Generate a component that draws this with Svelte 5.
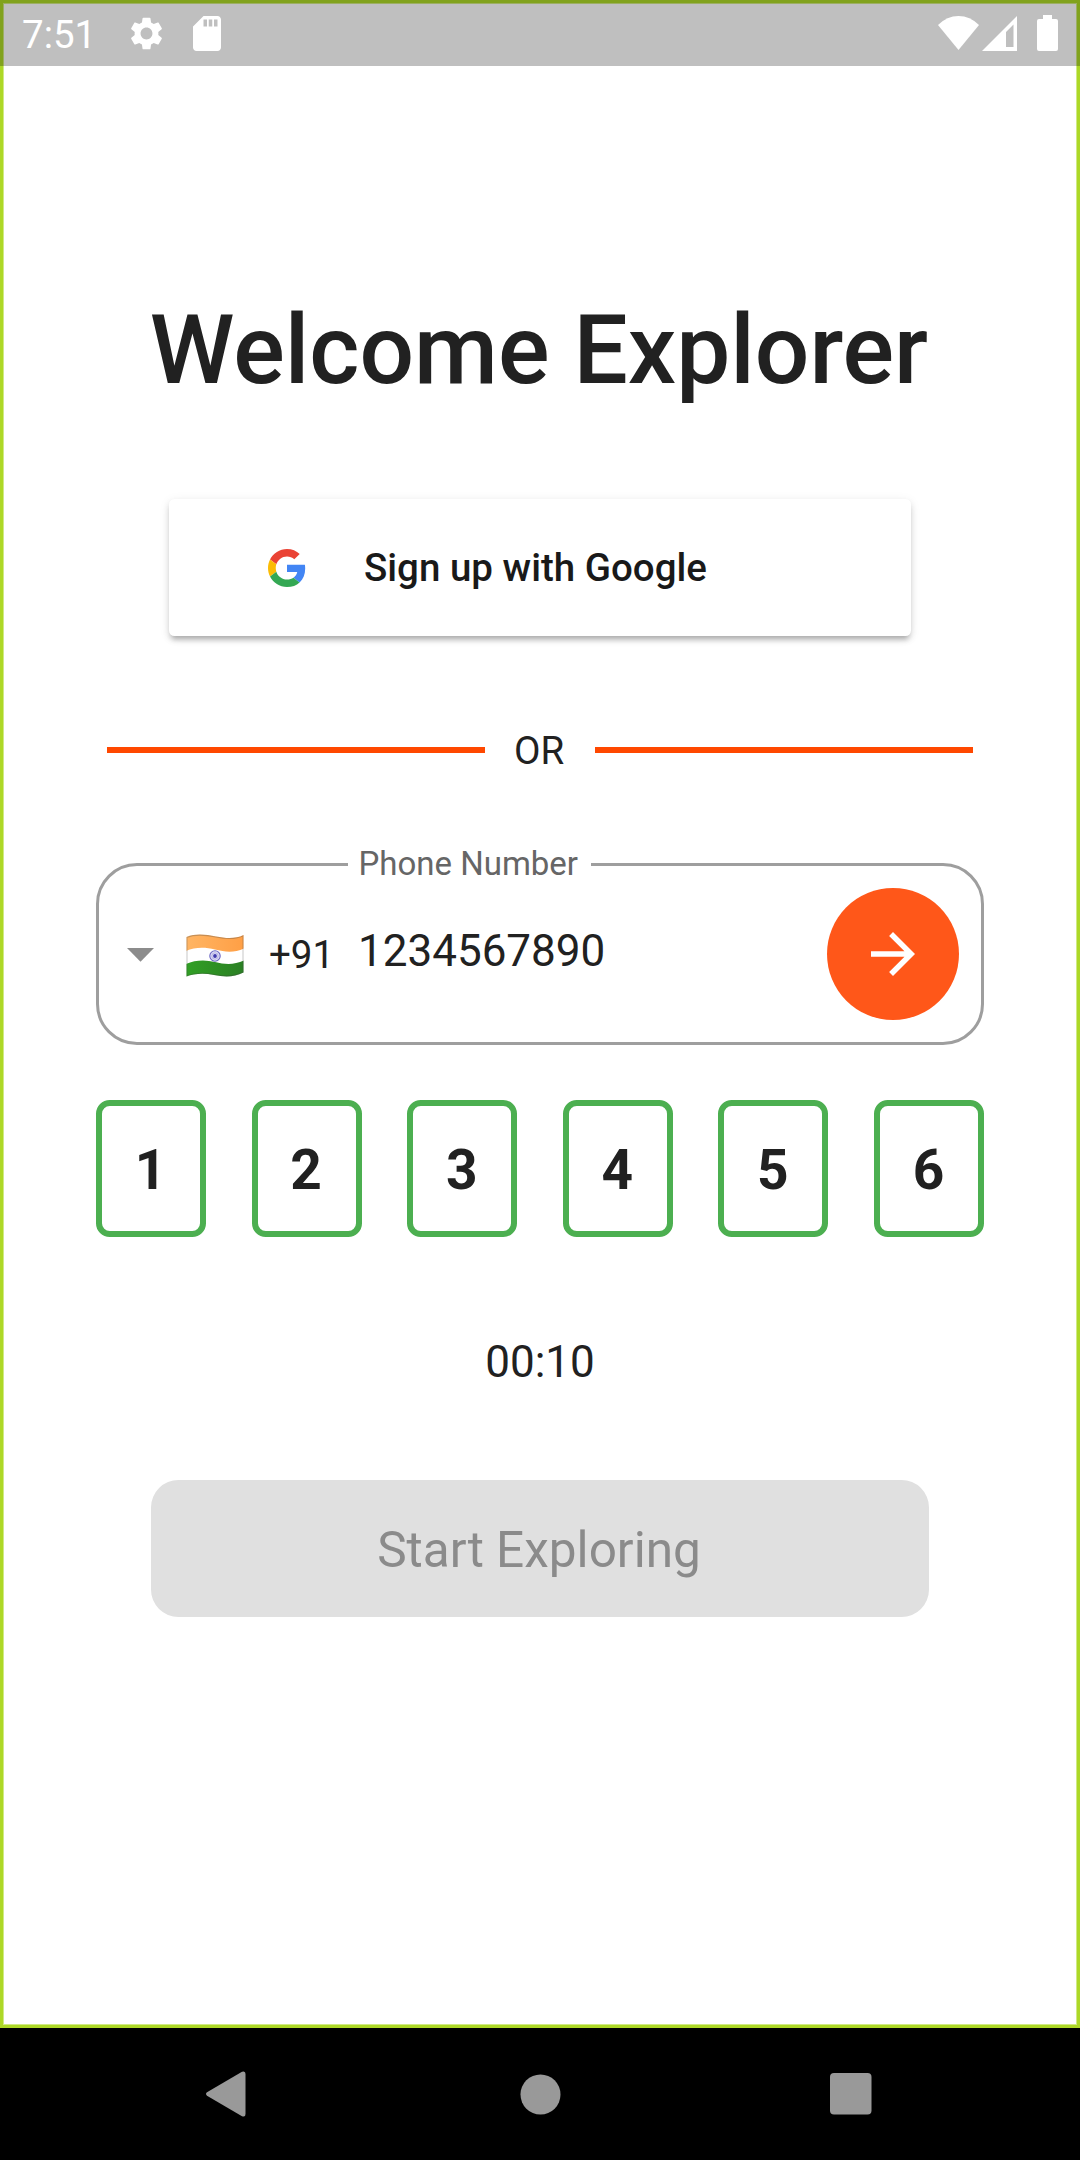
<script>
  const code = ['1', '2', '3', '4', '5', '6'];
</script>

<div class="phone">
  <div class="screen">
    <h1>Welcome Explorer</h1>

    <button class="google">
      <svg class="g-logo" viewBox="0 0 48 48">
        <path fill="#EA4335" d="M24 9.5c3.54 0 6.71 1.22 9.21 3.6l6.85-6.85C35.9 2.38 30.47 0 24 0 14.62 0 6.51 5.38 2.56 13.22l7.98 6.19C12.43 13.72 17.74 9.5 24 9.5z" />
        <path fill="#4285F4" d="M46.98 24.55c0-1.57-.15-3.09-.38-4.55H24v9.02h12.94c-.58 2.96-2.26 5.48-4.78 7.18l7.73 6c4.51-4.18 7.09-10.36 7.09-17.65z" />
        <path fill="#FBBC05" d="M10.53 28.59c-.48-1.45-.76-2.99-.76-4.59s.27-3.14.76-4.59l-7.98-6.19C.92 16.46 0 20.12 0 24c0 3.88.92 7.54 2.56 10.78l7.97-6.19z" />
        <path fill="#34A853" d="M24 48c6.48 0 11.93-2.13 15.89-5.81l-7.73-6c-2.15 1.45-4.92 2.3-8.16 2.3-6.26 0-11.57-4.22-13.47-9.91l-7.98 6.19C6.51 42.62 14.62 48 24 48z" />
      </svg>
      <span>Sign up with Google</span>
    </button>

    <div class="divider"><i></i><span>OR</span><i></i></div>

    <div class="phone-field">
      <span class="label">Phone Number</span>
      <svg class="caret" viewBox="0 0 28 14"><path d="M0 0h27L13.500 13.75z" fill="#8c8c8c" /></svg>
      <svg class="flag" viewBox="0 0 58 43">
        <defs>
          <clipPath id="cloth"><path d="M.5 3C10-1 20 .5 30 2.500s20 2.500 27.500-1.500v37.500C48 43.500 38 43 28 41S8 39.500.5 42.500z" /></clipPath>
          <linearGradient id="saffron"><stop offset="0" stop-color="#ffb564" /><stop offset="1" stop-color="#ff9f45" /></linearGradient>
          <linearGradient id="green"><stop offset="0" stop-color="#31a025" /><stop offset="1" stop-color="#2b7f24" /></linearGradient>
        </defs>
        <g clip-path="url(#cloth)">
          <path d="M0 0h58v43H0z" fill="#fff" />
          <path d="M0-2h58v16.500C48 19 39 18 29 15.500S9 13 0 17z" fill="url(#saffron)" />
          <path d="M0 45h58V26.500C48 31 39 30.500 29 28S9 26 0 30z" fill="url(#green)" />
          <path d="M.5 3C10-1 20 .5 30 2.500s20 2.500 27.500-1.500v37.500C48 43.500 38 43 28 41S8 39.500.5 42.500z" fill="none" stroke="#424242" stroke-opacity=".3" stroke-width="2" />
        </g>
        <circle cx="29" cy="22" r="5.200" fill="#e4e4f6" stroke="#6b66c4" stroke-width="1.100" />
        <circle cx="29" cy="22" r="3.200" fill="none" stroke="#b4b0e4" stroke-width="1" />
        <circle cx="29" cy="22" r="1.900" fill="#3f39ad" />
      </svg>
      <span class="dial">+91</span>
      <span class="number">1234567890</span>
      <button class="go" aria-label="Continue">
        <svg viewBox="0 0 24 24"><path fill="#fff" d="M12 4l-1.410 1.410L16.170 11H4v2h12.170l-5.580 5.590L12 20l8-8z" /></svg>
      </button>
    </div>

    <div class="otp">
      {#each code as digit}
        <span>{digit}</span>
      {/each}
    </div>

    <div class="timer">00:10</div>

    <button class="start" disabled>Start Exploring</button>
  </div>

  <div class="nav">
    <svg viewBox="0 0 40 46"><path fill="#999" d="M1 21.300 36 .8Q39.500-.5 39.500 3v40q0 3.500-3.500 2.200L1 24.700Q-1 23 1 21.300z" /></svg>
    <svg class="home" viewBox="0 0 41 41"><circle cx="20.500" cy="20.500" r="20" fill="#999" /></svg>
    <svg viewBox="0 0 42 42"><rect width="41.500" height="41.500" rx="4" fill="#999" /></svg>
  </div>

  <div class="status">
    <span>7:51</span>
    <svg class="gear" viewBox="2 2 20 20"><path fill="#fff" d="M19.140 12.940c.04-.3.060-.61.060-.94 0-.32-.02-.64-.07-.94l2.030-1.580c.18-.14.230-.41.120-.61l-1.920-3.320c-.12-.22-.37-.29-.59-.22l-2.390.96c-.5-.38-1.030-.7-1.620-.94l-.36-2.540c-.04-.24-.24-.41-.48-.41h-3.840c-.24 0-.43.170-.47.410l-.36 2.540c-.59.240-1.130.570-1.620.940l-2.390-.96c-.22-.08-.47 0-.59.220L2.740 8.870c-.12.210-.08.470.120.610l2.030 1.580c-.05.3-.09.630-.09.940s.02.640.07.940l-2.030 1.580c-.18.140-.23.410-.12.610l1.920 3.320c.12.220.37.290.59.220l2.390-.96c.5.380 1.030.7 1.620.940l.36 2.540c.05.240.24.410.48.410h3.840c.24 0 .44-.17.470-.41l.36-2.540c.59-.24 1.130-.56 1.620-.94l2.390.96c.22.080.47 0 .59-.22l1.920-3.320c.12-.22.070-.47-.12-.61l-2.010-1.580zM12 15.600c-1.980 0-3.600-1.620-3.600-3.600s1.620-3.600 3.600-3.600 3.600 1.620 3.600 3.600-1.620 3.600-3.600 3.600z" /></svg>
    <svg class="sd" viewBox="4 2 16 20" preserveAspectRatio="none"><path fill="#fff" fill-rule="evenodd" d="M18 2h-8L4 8v12c0 1.100.9 2 2 2h12c1.100 0 2-.9 2-2V4c0-1.100-.9-2-2-2zM12 8h-2V4h2zM15 8h-2V4h2zM18 8h-2V4h2z" /></svg>
    <span class="spacer"></span>
    <svg class="wifi" viewBox="0 0 41 34"><path fill="#fff" d="M20.500 34 0 9Q9 0 20.500 0T41 9z" /></svg>
    <svg class="signal" viewBox="0 0 35 35"><path fill="#fff" fill-rule="evenodd" d="M35 0v35H0zM31.500 8.500 24 16v15h7.500z" /></svg>
    <svg class="battery" viewBox="0 0 21 36"><path fill="#fff" d="M6 0h9v4h4q2 0 2 2v28q0 2-2 2H2q-2 0-2-2V6q0-2 2-2h4z" /></svg>
  </div>
</div>

<style>
  :global(body) {
    margin: 0;
    background: #fff;
  }
  .phone {
    position: relative;
    width: 1080px;
    height: 2160px;
    display: flex;
    flex-direction: column;
    font-family: Roboto, 'Liberation Sans', sans-serif;
    color: #212121;
    overflow: hidden;
  }
  .phone * {
    box-sizing: border-box;
  }
  svg {
    display: block;
    flex: none;
  }
  button {
    border: 0;
    padding: 0;
    font-family: inherit;
  }
  .screen {
    height: 2028px;
    border: 3px solid #add827;
    box-shadow: inset 0 0 0 1px #d0ea84;
    display: flex;
    flex-direction: column;
    align-items: center;
    padding-top: 291px;
  }
  h1 {
    margin: 0;
    padding-right: 2px;
    font-size: 96.25px;
    font-weight: 500;
    line-height: 112px;
    white-space: nowrap;
  }
  .google {
    width: 742px;
    height: 137px;
    margin-top: 93px;
    padding-left: 99px;
    display: flex;
    align-items: center;
    gap: 58px;
    background: #fff;
    border-radius: 5.5px;
    box-shadow: 0 5.5px 5px -3px rgba(0, 0, 0, 0.2), 0 4px 6px rgba(0, 0, 0, 0.12), 0 2px 11px rgba(0, 0, 0, 0.08);
    color: #191919;
    font-size: 38.5px;
    font-weight: 500;
    line-height: 46px;
  }
  .g-logo {
    width: 38px;
    height: 38px;
  }
  .divider {
    width: 866px;
    height: 46px;
    margin-top: 92px;
    display: flex;
    align-items: center;
    font-size: 38.5px;
    line-height: 46px;
  }
  .divider i {
    flex: 1;
    height: 6px;
    margin-bottom: 2px;
    background: #ff4800;
  }
  .divider span {
    width: 110px;
    padding-right: 2px;
    text-align: center;
  }
  .phone-field {
    position: relative;
    width: 888px;
    height: 182px;
    margin-top: 89px;
    padding: 0 22px 0 28px;
    display: flex;
    align-items: center;
    border: 3px solid #9e9e9e;
    border-radius: 41px;
  }
  .label {
    position: absolute;
    left: 249px;
    top: -22px;
    width: 242.5px;
    padding-right: 2px;
    background: #fff;
    color: #666;
    font-size: 33px;
    line-height: 40px;
    text-align: center;
  }
  .caret {
    width: 28px;
    height: 14px;
    margin-top: 2px;
  }
  .flag {
    width: 58px;
    height: 43px;
    margin: 2px 25px 0 31px;
  }
  .dial {
    width: 89px;
    padding-top: 2px;
    font-size: 38.5px;
    line-height: 46px;
  }
  .number {
    flex: 1;
    padding-bottom: 6px;
    font-size: 44px;
    line-height: 52px;
  }
  .go {
    width: 132px;
    height: 132px;
    border-radius: 50%;
    background: #ff5719;
    display: grid;
    place-items: center;
  }
  .go svg {
    width: 66px;
    height: 66px;
  }
  .otp {
    width: 888px;
    margin-top: 54px;
    padding-top: 1px;
    display: flex;
    justify-content: space-between;
  }
  .otp span {
    width: 110px;
    height: 137px;
    padding: 3px 1px 0 0;
    border: 6px solid #4caf50;
    border-radius: 13.75px;
    display: grid;
    place-items: center;
    font-size: 55px;
    font-weight: 700;
    line-height: 64px;
  }
  .timer {
    margin-top: 99px;
    font-size: 44px;
    line-height: 52px;
  }
  .start {
    width: 778px;
    height: 137px;
    margin-top: 92px;
    padding: 2px 2px 0 0;
    border-radius: 27.5px;
    background: #e0e0e0;
    color: #8b8b8b;
    font-size: 49.5px;
    line-height: 58px;
  }
  .nav {
    height: 132px;
    padding: 0 208px 0 206px;
    background: #000;
    display: flex;
    align-items: center;
    justify-content: space-between;
  }
  .nav svg {
    height: 42px;
  }
  .nav svg:first-child {
    height: 46px;
  }
  .nav .home {
    height: 41px;
    margin-left: 4px;
  }
  .status {
    position: absolute;
    inset: 0 0 auto 0;
    height: 66px;
    padding: 0 22px;
    background: rgba(0, 0, 0, 0.25);
    display: flex;
    align-items: center;
    color: #fff;
    font-size: 38.5px;
    line-height: 46px;
  }
  .status span:first-child {
    width: 108px;
    padding-top: 3px;
  }
  .spacer {
    flex: 1;
  }
  .gear {
    width: 33px;
    height: 35px;
  }
  .sd {
    width: 28px;
    height: 35px;
    margin-left: 30px;
  }
  .wifi {
    width: 41px;
    height: 34px;
  }
  .signal {
    width: 35px;
    height: 35px;
    margin-left: 3px;
  }
  .battery {
    width: 21px;
    height: 36px;
    margin-left: 20px;
  }
</style>
